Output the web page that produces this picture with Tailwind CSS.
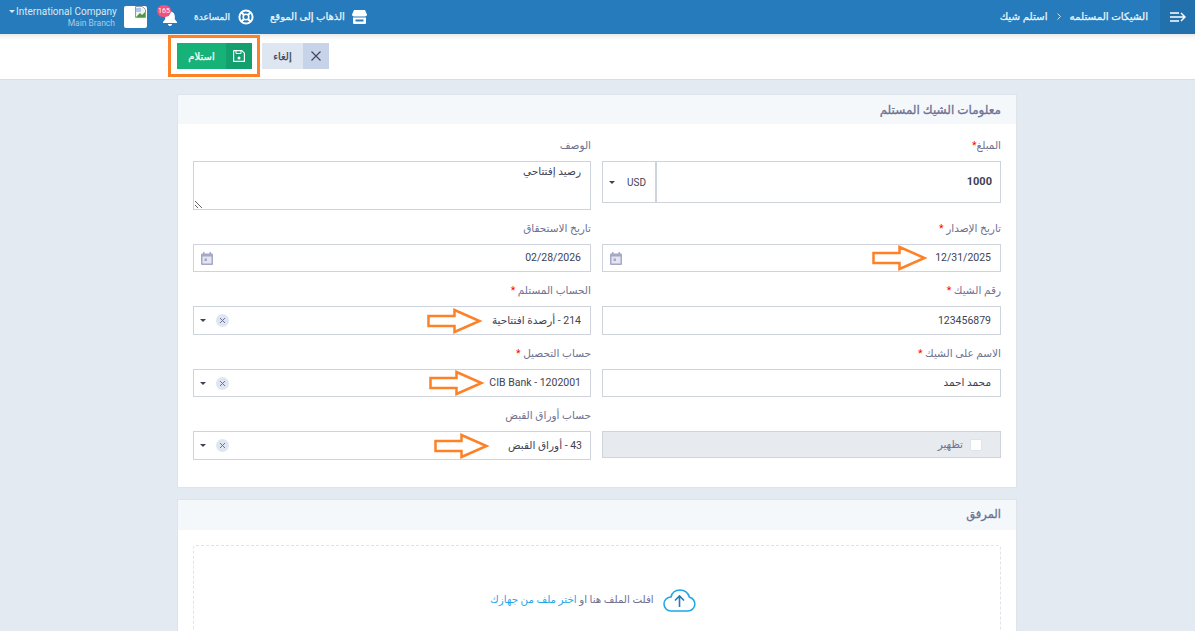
<!DOCTYPE html>
<html lang="ar">
<head>
    <meta charset="UTF-8">
    <meta name="viewport" content="width=device-width, initial-scale=1.0">
    <title>استلم شيك</title>
    <script src="https://cdn.jsdelivr.net/npm/@tailwindcss/browser@4"></script>
</head>
<body class="h-[631px] overflow-hidden bg-[#e4eaf2] font-['Roboto','Noto_Sans','DejaVu_Sans',sans-serif] text-[#3f4254]">
<!-- Header -->
<header class="flex h-[34px] items-center justify-between bg-[#257bbb] text-white">
    <div class="flex items-center pl-[9px]">
        <span class="mr-[1px] h-0 w-0 border-x-[3px] border-t-[3px] border-x-transparent border-t-[#dce9f4] -mt-[12px]"></span>
        <div class="w-[99px] whitespace-nowrap text-right">
            <div class="text-[10px] leading-[13px] text-[#dce9f4]">International Company</div>
            <div class="text-[8.500px] leading-[11px] text-[#a9cbe6]">Main Branch</div>
        </div>
        <!-- broken avatar -->
        <div class="relative ml-[9px] h-[22px] w-[23px] rounded-[2px] bg-white">
            <svg class="absolute right-0 top-0" width="13" height="13" viewBox="0 0 13 13">
                <path d="M1.5.5h7l3 3v8h-10z" fill="#f2f2f2" stroke="#9a9a9a"/>
                <path d="M2 11l4-4 2 2 3-3v5z" fill="#4c9a3f"/>
                <path d="M2 2h5v4H2z" fill="#a9c8ee"/>
            </svg>
        </div>
        <!-- bell -->
        <div class="relative ml-[16px] h-[18px] w-[14px]">
            <svg class="absolute left-0 top-[2px]" width="14" height="16" viewBox="0 0 14 16" fill="#fff">
                <path d="M7 0c.6 0 1 .5 1 1v.6c2.500.5 3.800 2.500 3.800 5v2.600L14 12v1H0v-1l2.200-2.800V6.600c0-2.500 1.300-4.500 3.800-5V1c0-.5.400-1 1-1z"/>
                <path d="M5 14h4c0 1.200-.9 2-2 2s-2-.8-2-2z"/>
            </svg>
            <span class="absolute -left-[6px] -top-[3px] flex h-[12px] w-[14px] items-center justify-center rounded-full bg-[#f1517c] text-[7px] leading-none text-white">165</span>
        </div>
        <div dir="rtl" class="ml-[17px] flex items-center gap-[8px]">
            <svg width="16" height="16" viewBox="0 0 16 16" fill="none" stroke="#fff">
                <circle cx="8" cy="8" r="6.600" stroke-width="2"/>
                <circle cx="8" cy="8" r="2.800" stroke-width="1.600"/>
                <path d="M3.500 3.500l2.500 2.500M12.500 3.500L10 6M3.500 12.500L6 10M12.500 12.500L10 10" stroke-width="2"/>
            </svg>
            <span class="whitespace-nowrap text-[9px] leading-none text-[#eef5fa] [-webkit-text-stroke:0.25px]">المساعدة</span>
        </div>
        <div dir="rtl" class="ml-[16px] flex items-center gap-[7px]">
            <svg width="15" height="14" viewBox="0 0 15 14" fill="#fff">
                <path d="M2 0h11l2 4.500c0 1.200-.9 2-2 2H2c-1.100 0-2-.8-2-2z"/>
                <path d="M1 7.500h13V13a1 1 0 0 1-1 1H2a1 1 0 0 1-1-1zM3.500 9.500v2h8v-2z" fill-rule="evenodd"/>
            </svg>
            <span class="whitespace-nowrap text-[10px] leading-none text-[#eef5fa] [-webkit-text-stroke:0.25px]">الذهاب إلى الموقع</span>
        </div>
    </div>
    <div class="flex h-full items-center">
        <div dir="rtl" class="flex items-center gap-[9px] text-[10.300px] leading-none text-[#eef5fa] [-webkit-text-stroke:0.25px]">
            <span>الشيكات المستلمه</span>
            <svg width="4" height="7" viewBox="0 0 4 7" fill="none" stroke="#cfe2f1"><path d="M.5.5l3 3-3 3"/></svg>
            <span>استلم شيك</span>
        </div>
        <div class="ml-[12px] flex h-full w-[35px] items-center justify-center bg-[#2270ac]">
            <svg width="16" height="10" viewBox="0 0 16 10" fill="none" stroke="#fff" stroke-width="1.500">
                <path d="M0 1h9M0 5h15M0 9h9M11 1l4 4-4 4"/>
            </svg>
        </div>
    </div>
</header>

<!-- Toolbar -->
<div class="relative flex h-[46px] gap-[10px] border-b border-[#d8dce3] bg-white pl-[177px] pt-[9px] shadow-[inset_0_7px_7px_-7px_rgba(0,0,0,0.18)]">
    <button dir="rtl" class="flex h-[26px] w-[75px] bg-[#17b277] text-[10px] text-white [-webkit-text-stroke:0.25px]">
        <span class="flex h-full w-[26px] items-center justify-center bg-[#139f6e]">
            <svg width="12" height="12" viewBox="0 0 12 12" fill="none" stroke="#fff" stroke-width="1.200">
                <path d="M1 .6h7.800L11.400 3.200V11.400H.6V1z"/>
                <path d="M3 1v2.500h5V1" stroke-width="1"/>
                <circle cx="6" cy="8" r="1.500" fill="#fff" stroke="none"/>
            </svg>
        </span>
        <span class="flex h-full flex-1 items-center justify-center">استلام</span>
    </button>
    <button dir="rtl" class="flex h-[26px] w-[67px] bg-[#dde6f1] text-[10px] text-[#3f4254] [-webkit-text-stroke:0.25px]">
        <span class="flex h-full w-[26px] items-center justify-center bg-[#c7d3e8]">
            <svg width="10" height="10" viewBox="0 0 10 10" fill="none" stroke="#3f4254" stroke-width="1.100"><path d="M.5.5l9 9M9.500.5l-9 9"/></svg>
        </span>
        <span class="flex h-full flex-1 items-center justify-center">إلغاء</span>
    </button>
    <!-- annotation round the save button -->
    <div class="absolute left-[168px] top-[1px] h-[42px] w-[92px] border-[3px] border-[#fd8127]"></div>
</div>

<main dir="rtl" class="ml-[177px] mt-[14px] w-[840px]">
    <!-- Check info -->
    <section class="border border-[#dfe3ea] bg-white">
        <h2 class="flex h-[29px] items-center bg-[#f5f8fb] px-[15px] text-[12px] text-[#6c7293] [-webkit-text-stroke:0.3px]">معلومات الشيك المستلم</h2>
        <div class="grid grid-cols-[399px_398px] items-start gap-x-[11px] gap-y-[10px] px-[15px] pb-[27px] pt-[13px]">
            <div>
                <label class="mb-[8px] block h-[16px] text-[10.500px] leading-[18px] text-[#6e7191]">المبلغ<span class="text-[#f00]">*</span></label>
                <div class="flex h-[42px] border border-[#ced3dc]">
                    <div dir="ltr" class="flex flex-1 items-center justify-end px-[8px] text-[11px] font-bold">1000</div>
                    <div dir="ltr" class="flex w-[54px] items-center justify-between border-r-2 border-[#ced3dc] pl-[6px] pr-[9px] text-[10px]">
                        <span class="h-0 w-0 border-x-[3px] border-t-[3px] border-x-transparent border-t-[#3f4254]"></span>
                        <span>USD</span>
                    </div>
                </div>
            </div>
            <div>
                <label class="mb-[8px] block h-[16px] text-[10.500px] leading-[18px] text-[#6e7191]">الوصف</label>
                <textarea class="block h-[49px] w-full border border-[#ced3dc] px-[9px] py-[2px] text-[10.500px] leading-[16px] text-[#3f4254]">رصيد إفتتاحي</textarea>
            </div>

            <div>
                <label class="mb-[8px] block h-[16px] text-[10.500px] leading-[18px] text-[#6e7191]">تاريخ الإصدار <span class="text-[#f00]">*</span></label>
                <div class="relative flex h-[28px] items-center justify-between border border-[#ced3dc] pl-[7px] pr-[9px] text-[10.500px]">
                    <span dir="ltr">12/31/2025</span>
                    <svg width="12" height="13" viewBox="0 0 12 13"><path d="M2 0h1.500v1.500h5V0H10v1.500h1a1 1 0 0 1 1 1V12a1 1 0 0 1-1 1H1a1 1 0 0 1-1-1V2.500a1 1 0 0 1 1-1h1z" fill="#a5a8c6"/><path d="M1.500 4.500h9v7h-9z" fill="#e4e5f1"/><path d="M3.500 6.500h2.500v2.500H3.500z" fill="#a5a8c6"/></svg>
                    <svg class="absolute left-[269px] top-0" width="57" height="26" viewBox="0 0 57 26" fill="none" stroke="#fd8127" stroke-width="2.500"><path d="M1.500 8h26V2l25 11-25 11v-6h-26z"/></svg>
                </div>
            </div>
            <div>
                <label class="mb-[8px] block h-[16px] text-[10.500px] leading-[18px] text-[#6e7191]">تاريخ الاستحقاق</label>
                <div class="flex h-[28px] items-center justify-between border border-[#ced3dc] pl-[7px] pr-[9px] text-[10.500px]">
                    <span dir="ltr">02/28/2026</span>
                    <svg width="12" height="13" viewBox="0 0 12 13"><path d="M2 0h1.500v1.500h5V0H10v1.500h1a1 1 0 0 1 1 1V12a1 1 0 0 1-1 1H1a1 1 0 0 1-1-1V2.500a1 1 0 0 1 1-1h1z" fill="#a5a8c6"/><path d="M1.500 4.500h9v7h-9z" fill="#e4e5f1"/><path d="M3.500 6.500h2.500v2.500H3.500z" fill="#a5a8c6"/></svg>
                </div>
            </div>

            <div>
                <label class="mb-[8px] block h-[16px] text-[10.500px] leading-[18px] text-[#6e7191]">رقم الشيك <span class="text-[#f00]">*</span></label>
                <div class="flex h-[29px] items-center border border-[#ced3dc] px-[9px] text-[10.500px]">123456879</div>
            </div>
            <div>
                <label class="mb-[8px] block h-[16px] text-[10.500px] leading-[18px] text-[#6e7191]">الحساب المستلم <span class="text-[#f00]">*</span></label>
                <div class="relative flex h-[29px] items-center justify-between border border-[#ced3dc] pl-[6px] pr-[9px] text-[10.500px]">
                    <span>214 - أرصدة افتتاحية</span>
                    <span class="flex items-center gap-[10px]">
                        <span class="flex h-[13px] w-[13px] items-center justify-center rounded-full bg-[#dde6f1] text-[#6e7191]"><svg width="5" height="5" viewBox="0 0 5 5" stroke="currentColor"><path d="M0 0l5 5M5 0L0 5"/></svg></span>
                        <span class="h-0 w-0 border-x-[3px] border-t-[3px] border-x-transparent border-t-[#3f4254]"></span>
                    </span>
                    <svg class="absolute left-[233px] top-[1px]" width="57" height="26" viewBox="0 0 57 26" fill="none" stroke="#fd8127" stroke-width="2.500"><path d="M1.500 8h26V2l25 11-25 11v-6h-26z"/></svg>
                </div>
            </div>

            <div>
                <label class="mb-[8px] block h-[16px] text-[10.500px] leading-[18px] text-[#6e7191]">الاسم على الشيك <span class="text-[#f00]">*</span></label>
                <div class="flex h-[28px] items-center border border-[#ced3dc] px-[9px] text-[10.500px]">محمد احمد</div>
            </div>
            <div>
                <label class="mb-[8px] block h-[16px] text-[10.500px] leading-[18px] text-[#6e7191]">حساب التحصيل <span class="text-[#f00]">*</span></label>
                <div class="relative flex h-[28px] items-center justify-between border border-[#ced3dc] pl-[6px] pr-[9px] text-[10.500px]">
                    <span dir="ltr">CIB Bank - 1202001</span>
                    <span class="flex items-center gap-[10px]">
                        <span class="flex h-[13px] w-[13px] items-center justify-center rounded-full bg-[#dde6f1] text-[#6e7191]"><svg width="5" height="5" viewBox="0 0 5 5" stroke="currentColor"><path d="M0 0l5 5M5 0L0 5"/></svg></span>
                        <span class="h-0 w-0 border-x-[3px] border-t-[3px] border-x-transparent border-t-[#3f4254]"></span>
                    </span>
                    <svg class="absolute left-[235px] top-0" width="57" height="26" viewBox="0 0 57 26" fill="none" stroke="#fd8127" stroke-width="2.500"><path d="M1.500 8h26V2l25 11-25 11v-6h-26z"/></svg>
                </div>
            </div>

            <div class="pt-[24px]">
                <div class="flex h-[27px] items-center gap-[7px] border border-[#ced3dc] bg-[#e7eaee] pr-[18px] text-[10.500px] text-[#6e7191]">
                    <span class="h-[12px] w-[12px] rounded-[1px] border border-[#dfe3ea] bg-white"></span>
                    <span>تظهير</span>
                </div>
            </div>
            <div>
                <label class="mb-[8px] block h-[16px] text-[10.500px] leading-[18px] text-[#6e7191]">حساب أوراق القبض</label>
                <div class="relative flex h-[29px] items-center justify-between border border-[#ced3dc] pl-[6px] pr-[8px] text-[10.500px]">
                    <span>43 - أوراق القبض</span>
                    <span class="flex items-center gap-[10px]">
                        <span class="flex h-[13px] w-[13px] items-center justify-center rounded-full bg-[#dde6f1] text-[#6e7191]"><svg width="5" height="5" viewBox="0 0 5 5" stroke="currentColor"><path d="M0 0l5 5M5 0L0 5"/></svg></span>
                        <span class="h-0 w-0 border-x-[3px] border-t-[3px] border-x-transparent border-t-[#3f4254]"></span>
                    </span>
                    <svg class="absolute left-[240px] top-[1px]" width="57" height="26" viewBox="0 0 57 26" fill="none" stroke="#fd8127" stroke-width="2.500"><path d="M1.500 8h26V2l25 11-25 11v-6h-26z"/></svg>
                </div>
            </div>
        </div>
    </section>

    <!-- Attachment -->
    <section class="mt-[11px] border border-[#dfe3ea] bg-white">
        <h2 class="flex h-[30px] items-center bg-[#f5f8fb] px-[15px] text-[11.500px] text-[#6c7293] [-webkit-text-stroke:0.3px]">المرفق</h2>
        <div class="px-[15px] pt-[15px]">
            <div class="flex h-[110px] items-center justify-center gap-[9px] rounded-[3px] border border-dashed border-[#dfe3ea] pr-[8px] text-[10.300px] text-[#6e7191]">
                <svg width="33" height="23" viewBox="0 0 33 23" fill="none" stroke="#1ea7e8" stroke-width="1.600">
                    <path d="M8 22h17a7 7 0 0 0 1.500-13.800C25 3.500 21 1 17 1c-4.500 0-8 2.800-9 7A7 7 0 0 0 8 22z"/>
                    <path d="M16.500 18V7M12 11.500l4.500-4.500 4.500 4.500" stroke="#257bbb"/>
                </svg>
                <span>افلت الملف هنا او <span class="text-[#1ea7e8]">اختر ملف من جهازك</span></span>
            </div>
        </div>
    </section>
</main>
</body>
</html>
